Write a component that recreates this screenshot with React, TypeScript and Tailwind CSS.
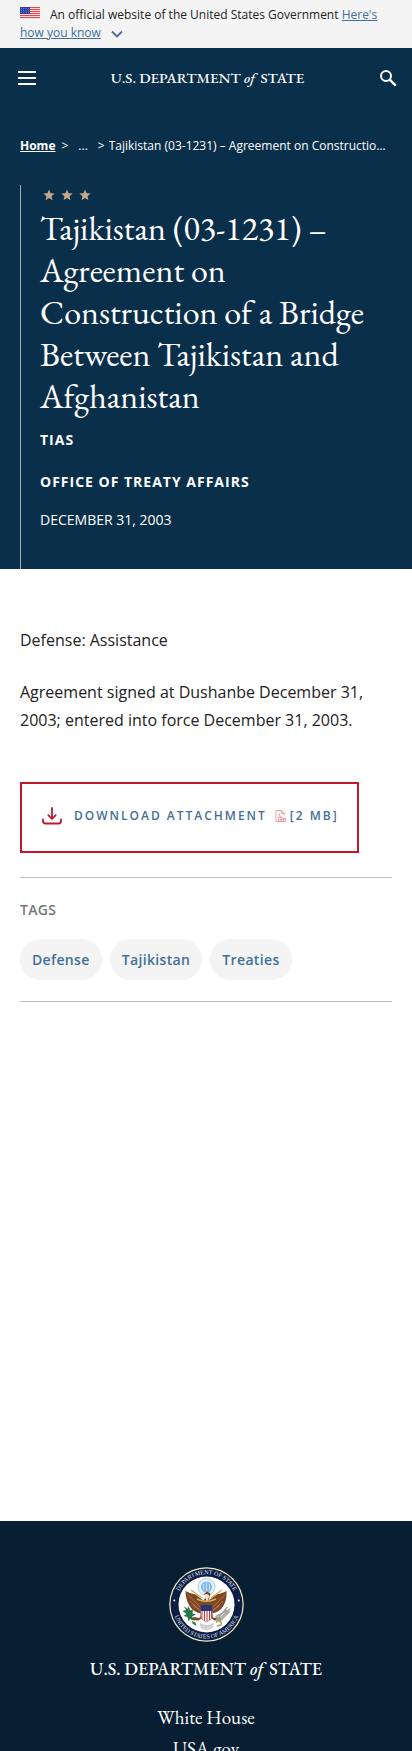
import React from 'react';

const serif = "font-['EB_Garamond','Liberation_Serif',serif]";

function FlagIcon() {
  return (
    <svg viewBox="0 0 20 12" className="inline-block h-3 w-5 align-baseline" aria-hidden="true">
      <rect width="20" height="12" fill="#fff" />
      {[0, 2, 4, 6, 8, 10].map((y) => (
        <rect key={y} y={y} width="20" height="1.2" fill="#dc4a50" />
      ))}
      <rect width="10" height="7" fill="#2c3fa0" />
      {[1.5, 3.5, 5.5].map((y) =>
        [1.5, 3.8, 6.1, 8.4].map((x) => <circle key={`${x}-${y}`} cx={x} cy={y} r="0.45" fill="#c9d0f2" />),
      )}
    </svg>
  );
}

function Star() {
  return (
    <svg viewBox="0 0 24 24" className="size-3" fill="#c9a78a" aria-hidden="true">
      <path d="M12 1l3.1 7.600 8.200.600-6.300 5.300 2 8-7-4.400-7 4.400 2-8-6.300-5.300 8.200-.6z" />
    </svg>
  );
}

function DownloadIcon() {
  return (
    <svg viewBox="0 0 20 18" className="h-[18px] w-5 shrink-0" fill="none" stroke="#c01a2a" strokeWidth="1.8" strokeLinecap="round" strokeLinejoin="round" aria-hidden="true">
      <path d="M10 1v10.500M6.300 8.200L10 11.900l3.700-3.700" />
      <path d="M1 12.500v1.500q0 2.500 2.500 2.500h13q2.500 0 2.500-2.500v-1.500" />
    </svg>
  );
}

function PdfIcon() {
  return (
    <svg viewBox="0 0 12 13" className="h-3 w-[11px] shrink-0" fill="none" stroke="#e8797c" strokeWidth="0.8" aria-hidden="true">
      <path d="M3 12.500H1V.5h6L10 3.500V6M7 .5v3h3" />
      <path d="M3 9c2-2 2.500-4 2-5s-1 .5 0 2 2 2.500 3.500 2.500M3 9c1-1 3-1.500 5.500-1" strokeWidth=".6" />
      <path d="M4 12V9.500M6.500 12V9.500h1M9 12V9.500h2" stroke="#b54a55" />
      <path d="M3 12.500h8.500V8.500" />
    </svg>
  );
}

function Seal() {
  return (
    <svg viewBox="0 0 150 150" className="size-[75px]" role="img" aria-label="Department of State seal">
      <defs>
        <path id="seal-top" d="M14.500 75a60.500 60.500 0 0 1 121 0" />
        <path id="seal-bottom" d="M7 75a68 68 0 0 0 136 0" />
      </defs>
      <circle cx="75" cy="75" r="74.500" fill="#f1ecc0" />
      <circle cx="75" cy="75" r="72" fill="#0b1d45" />
      <circle cx="75" cy="75" r="56" fill="#fff" />
      <g fill="#e3e6ee" fontFamily="Liberation Serif, serif" fontSize="12" textAnchor="middle">
        <text><textPath href="#seal-top" startOffset="50%">DEPARTMENT OF STATE</textPath></text>
        <text><textPath href="#seal-bottom" startOffset="50%">UNITED STATES OF AMERICA</textPath></text>
      </g>
      <circle cx="10.500" cy="67" r="2" fill="#fff" />
      <circle cx="139.500" cy="67" r="2" fill="#fff" />
      <circle cx="75" cy="40" r="17" fill="#e4f0fa" stroke="#9cc5e8" strokeWidth="1.5" />
      <circle cx="75" cy="40" r="11" fill="#82b9e8" />
      <path d="M69 34v12M75 31v18M81 34v12" stroke="#c7e2f8" strokeWidth="2" />
      <path d="M33 48c5 3 12 5 20 7l16 12 5-8-4-5 6-5 7 4-2 7-2 7 16-12c8-2 15-4 20-7 1 15-3 28-12 37-6 6-13 7-18 8l4 9 12-2 5 6-15 1-10-7-6 4-6-4-10 7-15-1 5-6 12 2 4-9c-5-1-12-2-18-8-9-9-14-23-14-37z" fill="#7f4524" />
      <path d="M38 55l25 26M42 68l20 19M112 55L87 81M108 68L88 87M48 77l16 11M102 77L86 88" stroke="#b97b4f" strokeWidth="1.8" />
      <path d="M44 46l22 16M106 46L84 62M56 64q18 9 38 0" stroke="#d5b355" strokeWidth="3" fill="none" />
      <path d="M70 57q5-6 11 1l-5 11z" fill="#f1e5cf" />
      <path d="M63 79h24v19q0 7-12 12-12-5-12-12z" fill="#fff" stroke="#8e2c32" />
      <path d="M66 86v18M71 86v22M76 86v22M81 86v20M85 86v16" stroke="#ba4046" strokeWidth="2.2" />
      <path d="M63 77q12-3 24 0v11H63z" fill="#253875" />
      <g fill="#28764a">
        <path d="M29 78l8 6 1-6 5 9 5-3-1 9 7 2-8 4 5 8-9-3-3 5-2-9-8-2 6-4-8-6 7-2z" />
        <path d="M45 108l8 3 2 7-7-4z" />
      </g>
      <g stroke="#a5a79e" strokeWidth="3" strokeLinecap="round">
        <path d="M95 106l21-25M99 106l23-22M94 99l22-12M101 109l20-20" />
      </g>
      <path d="M94 111q7-7 10 0t-8 6" fill="none" stroke="#b59a59" strokeWidth="3" />
      <path d="M62 113q13 8 27 0l-3 9-11 4-10-4z" fill="#d5d5d8" stroke="#a9a9b0" />
    </svg>
  );
}

function Wordmark({ size }: { size: string }) {
  return (
    <a href="#home" className={`${serif} ${size} font-medium whitespace-nowrap text-white`}>
      U.S. DEPARTMENT <em className="mr-0.5">of</em> STATE
    </a>
  );
}

export default function App() {
  return (
    <div className="bg-white font-['Open_Sans',sans-serif] text-[#222]">
      <div className="bg-[#f4f4f4] px-5 pt-1.5 pb-1.5 text-xs leading-[18px]">
        <FlagIcon />
        <span className="ml-2.5">An official website of the United States Government </span>
        <a href="#how-you-know" className="text-[#41709b]">
          <span className="underline">Here's how you know</span>
          <svg viewBox="0 0 12 8" className="ml-2.5 inline-block h-2 w-3" fill="none" stroke="#41709b" strokeWidth="1.8" aria-hidden="true">
            <path d="M1 1.500l5 5 5-5" />
          </svg>
        </a>
      </div>

      <div className="bg-[#0a2f4b] text-white">
        <header className="flex h-[60px] items-center justify-between pr-[15px] pl-[18px]">
          <button type="button" aria-label="Menu" className="flex w-[18px] flex-col gap-1">
            <span className="h-0.5 bg-white" />
            <span className="h-0.5 bg-white" />
            <span className="h-0.5 bg-white" />
          </button>
          <Wordmark size="text-[15px]" />
          <button type="button" aria-label="Search">
            <svg viewBox="0 0 18 18" className="size-[18px]" fill="none" stroke="#fff" strokeWidth="2" aria-hidden="true">
              <circle cx="7" cy="7" r="5" />
              <path d="M10.700 10.700l6 6" strokeWidth="2.4" />
            </svg>
          </button>
        </header>

        <nav aria-label="Breadcrumb" className="mt-7 flex px-5 text-xs leading-5">
          <a href="#home" className="font-bold underline">Home</a>
          <span className="ml-1.5">&gt;</span>
          <span className="ml-2.5">...</span>
          <span className="ml-2.5">&gt;</span>
          <span className="ml-1 min-w-0 truncate">Tajikistan (03-1231) – Agreement on Construction of a Bridge Between Tajikistan and Afghanistan</span>
        </nav>

        <div className="mt-[29px] ml-5 border-l border-[#a5adae] pr-5 pb-[37px] pl-[19px]">
          <div className="flex gap-1.5 pt-1 pl-[3px]">
            <Star />
            <Star />
            <Star />
          </div>
          <h1 className={`${serif} mt-1.5 text-[34px] leading-[42px]`}>
            Tajikistan (03-1231) – Agreement on Construction of a Bridge Between Tajikistan and Afghanistan
          </h1>
          <p className="mt-[11px] text-sm leading-6 font-bold tracking-[1px]">TIAS</p>
          <p className="mt-[18px] text-sm leading-6 font-bold tracking-[1px]">OFFICE OF TREATY AFFAIRS</p>
          <p className="mt-3.5 text-sm leading-6">DECEMBER 31, 2003</p>
        </div>
      </div>

      <main className="px-5 pt-[57px] pb-[519px]">
        <p className="text-base leading-7">Defense: Assistance</p>
        <p className="mt-6 text-base leading-7">
          Agreement signed at Dushanbe December 31, 2003; entered into force December 31, 2003.
        </p>
        <a href="#download" className="mt-12 inline-flex h-[71px] items-center border-2 border-[#c01a2a] pr-[18px] pb-1 pl-5 text-xs font-semibold tracking-[2px] whitespace-nowrap text-[#41709b]">
          <DownloadIcon />
          <span className="ml-3">DOWNLOAD ATTACHMENT</span>
          <span className="ml-2"><PdfIcon /></span>
          <span className="ml-1">[2 MB]</span>
        </a>
        <section className="mt-6 border-y border-[#bdbdbd] pt-5 pb-[21px]">
          <h2 className="text-sm leading-6 font-semibold tracking-wide text-[#777]">TAGS</h2>
          <ul className="mt-[17px] flex gap-2 text-sm font-semibold tracking-wide text-[#41709b]">
            {['Defense', 'Tajikistan', 'Treaties'].map((tag) => (
              <li key={tag}>
                <a href={`#${tag}`} className="flex h-[41px] items-center rounded-full bg-[#f4f4f4] px-3">{tag}</a>
              </li>
            ))}
          </ul>
        </section>
      </main>

      <footer className="flex flex-col items-center bg-[#071e33] pt-[46px] text-white">
        <Seal />
        <div className="mt-[11px] leading-8"><Wordmark size="text-[18px]" /></div>
        <nav className={`${serif} mt-[17px] flex h-[49px] flex-col items-center overflow-hidden text-[19px] leading-[31px]`}>
          <a href="#white-house">White House</a>
          <a href="#usa">USA.gov</a>
        </nav>
      </footer>
    </div>
  );
}
